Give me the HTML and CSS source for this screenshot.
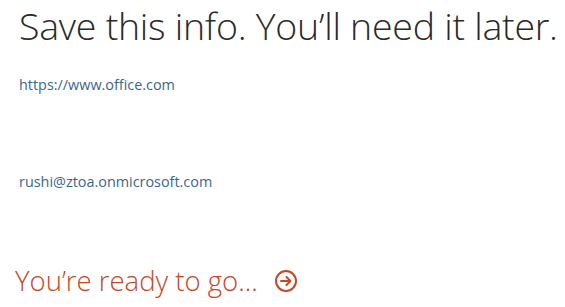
FILE: index.html
```html
<!DOCTYPE html>
<html>
<head>
<meta charset="utf-8">
<link rel="stylesheet" href="styles.css">
</head>
<body>
<div class="page">
  <h1 class="title">Save this info. You’ll need it later.</h1>
  <div class="info url">https://www.office.com</div>
  <div class="info email">rushi@ztoa.onmicrosoft.com</div>
  <div class="ready">
    <span class="ready-text">You’re ready to go...</span>
    <svg class="arrow" width="24" height="24" viewBox="0 0 24 24">
      <circle cx="12" cy="12" r="10" fill="none" stroke="#c4472a" stroke-width="2"/>
      <path d="M7 12 H16.5 M12.5 8 L16.5 12 L12.5 16" fill="none" stroke="#c4472a" stroke-width="2" stroke-linecap="round" stroke-linejoin="round"/>
    </svg>
  </div>
</div>
</body>
</html>
```
FILE: styles.css
```css
html, body {
  margin: 0;
  padding: 0;
  background: #ffffff;
}
.page {
  width: 565px;
  height: 307px;
  overflow: hidden;
  font-family: "Open Sans", "Liberation Sans", sans-serif;
}
.title {
  margin: 0;
  padding: 0 0 0 19px;
  font-size: 37.5px;
  font-weight: 300;
  color: #2a2a2a;
  line-height: 52px;
  white-space: nowrap;
  letter-spacing: -0.25px;
}
.info {
  padding-left: 19px;
  font-size: 14.4px;
  font-weight: 400;
  color: #3a6690;
  line-height: 18px;
}
.url {
  margin-top: 24px;
}
.email {
  margin-top: 79px;
}
.ready {
  margin-top: 74px;
  padding-left: 15px;
  display: flex;
  align-items: center;
  gap: 16px;
}
.ready-text {
  font-size: 27.5px;
  font-weight: 300;
  color: #c4472a;
  line-height: 32px;
}
.arrow {
  display: block;
}
```
